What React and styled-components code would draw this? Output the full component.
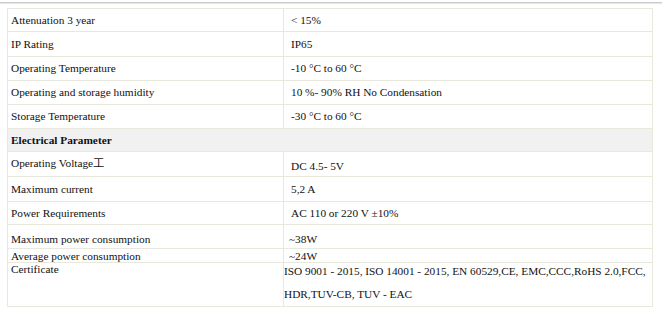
import React from "react";
import styled, { createGlobalStyle } from "styled-components";

const Global = createGlobalStyle`
  html, body { margin: 0; padding: 0; background: #fff; }
  body { font-family: "Liberation Serif", "Noto Sans CJK SC", serif; color: #111; }
`;

const Page = styled.div`
  width: 662px;
  height: 335px;
  background: #fff;
  display: flex;
  flex-direction: column;
`;

const TopRule = styled.div`
  height: 2px;
  border-bottom: 1px solid #c9c9c9;
  box-shadow: 0 1px 1px #e6e6e6;
  flex: none;
`;

const Wrap = styled.div`
  padding: 5px 0 0 7px;
`;

const Table = styled.table`
  border-collapse: collapse;
  width: 645px;
  table-layout: fixed;
  font-size: 11.3px;
  line-height: 13px;
  border: 1px solid #e9e8dc;
`;

const Row = styled.tr`
  height: ${(p) => p.$h}px;
  background: ${(p) => (p.$shade ? "#f1f1f1" : "#fff")};
`;

const Cell = styled.td`
  border: 1px solid #e9e8dc;
  padding: ${(p) => p.$pt || 0}px 2px ${(p) => p.$pb || 0}px ${(p) => p.$pl}px;
  vertical-align: ${(p) => p.$va || "middle"};
  font-weight: ${(p) => (p.$bold ? 700 : 400)};
  line-height: ${(p) => p.$lh || 13}px;
  white-space: nowrap;
  overflow: hidden;
`;

const Lines = styled.div`
  line-height: 23px;
  margin-top: -3px;
`;

const rows = [
  { h: 23, a: "Attenuation 3 year", b: "< 15%" },
  { h: 25, a: "IP Rating", b: "IP65" },
  { h: 24, a: "Operating Temperature", b: "-10 °C to 60 °C" },
  { h: 24, a: "Operating and storage humidity", b: "10 %- 90% RH No Condensation" },
  { h: 24, a: "Storage Temperature", b: "-30 °C to 60 °C" },
];

const rows2 = [
  { h: 25, a: "Maximum current", b: "5,2 A" },
  { h: 23, a: "Power Requirements", b: "AC 110 or 220 V ±10%" },
];

export default function App() {
  return (
    <Page>
      <Global />
      <TopRule />
      <Wrap>
        <Table>
          <colgroup>
            <col style={{ width: 276 }} />
            <col style={{ width: 369 }} />
          </colgroup>
          <tbody>
            {rows.map((r) => (
              <Row key={r.a} $h={r.h}>
                <Cell $pl={3}>{r.a}</Cell>
                <Cell $pl={7}>{r.b}</Cell>
              </Row>
            ))}
            <Row $h={23} $shade>
              <Cell $pl={3} $bold colSpan={2}>Electrical Parameter</Cell>
            </Row>
            <Row $h={25}>
              <Cell $pl={3} $va="top" $pt={5}>Operating Voltage工</Cell>
              <Cell $pl={7} $va="top" $pt={8}>DC 4.5- 5V</Cell>
            </Row>
            {rows2.map((r) => (
              <Row key={r.a} $h={r.h}>
                <Cell $pl={3}>{r.a}</Cell>
                <Cell $pl={7}>{r.b}</Cell>
              </Row>
            ))}
            <Row $h={24}>
              <Cell $pl={3} $va="bottom" $pb={2}>Maximum power consumption</Cell>
              <Cell $pl={5} $va="bottom" $pb={2}>~38W</Cell>
            </Row>
            <Row $h={14}>
              <Cell $pl={3} $lh={12}>Average power consumption</Cell>
              <Cell $pl={5} $lh={12}>~24W</Cell>
            </Row>
            <Row $h={41}>
              <Cell $pl={3} $va="top" $lh={12}>Certificate</Cell>
              <Cell $pl={0} $va="top" $lh={12}>
                <Lines>
                  ISO 9001 - 2015, ISO 14001 - 2015, EN 60529,CE, EMC,CCC,RoHS 2.0,FCC,
                  <br />
                  HDR,TUV-CB, TUV - EAC
                </Lines>
              </Cell>
            </Row>
          </tbody>
        </Table>
      </Wrap>
    </Page>
  );
}
